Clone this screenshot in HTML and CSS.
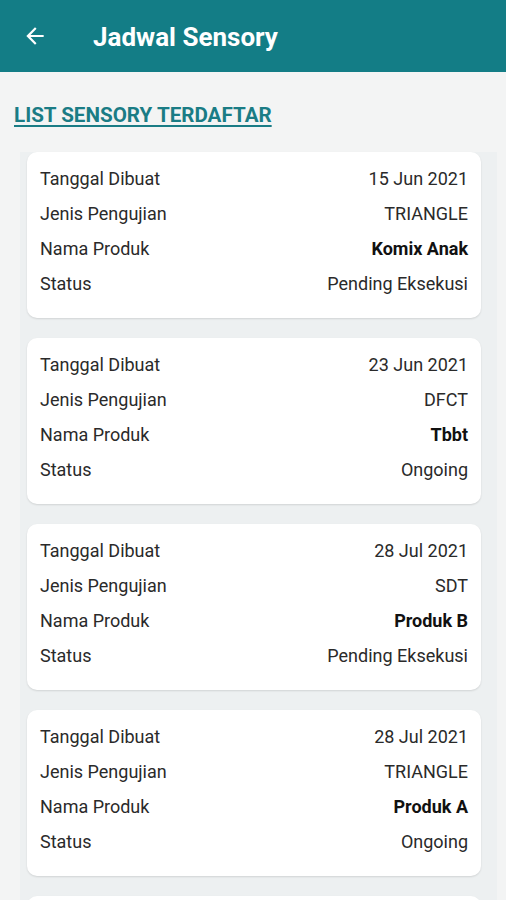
FILE: index.html
```html
<!DOCTYPE html>
<html lang="id">
<head>
    <meta charset="UTF-8">
    <meta name="viewport" content="width=device-width, initial-scale=1.0">
    <title>Jadwal Sensory</title>
    <link rel="stylesheet" href="styles.css">
</head>
<body>

    <!-- Toolbar -->
    <header class="toolbar">
        <svg class="back" viewBox="0 0 24 24" width="24" height="24">
            <path d="M20 11H7.83l5.59-5.59L12 4l-8 8 8 8 1.41-1.41L7.83 13H20v-2z" fill="#fff"/>
        </svg>
        <h1 class="toolbar-title">Jadwal Sensory</h1>
    </header>

    <h2 class="section-title">LIST SENSORY TERDAFTAR</h2>

    <!-- Daftar sensory -->
    <div class="list">
        <div class="card">
            <div class="row"><span>Tanggal Dibuat</span><span>15 Jun 2021</span></div>
            <div class="row"><span>Jenis Pengujian</span><span>TRIANGLE</span></div>
            <div class="row"><span>Nama Produk</span><span class="bold">Komix Anak</span></div>
            <div class="row"><span>Status</span><span>Pending Eksekusi</span></div>
        </div>
        <div class="card">
            <div class="row"><span>Tanggal Dibuat</span><span>23 Jun 2021</span></div>
            <div class="row"><span>Jenis Pengujian</span><span>DFCT</span></div>
            <div class="row"><span>Nama Produk</span><span class="bold">Tbbt</span></div>
            <div class="row"><span>Status</span><span>Ongoing</span></div>
        </div>
        <div class="card">
            <div class="row"><span>Tanggal Dibuat</span><span>28 Jul 2021</span></div>
            <div class="row"><span>Jenis Pengujian</span><span>SDT</span></div>
            <div class="row"><span>Nama Produk</span><span class="bold">Produk B</span></div>
            <div class="row"><span>Status</span><span>Pending Eksekusi</span></div>
        </div>
        <div class="card">
            <div class="row"><span>Tanggal Dibuat</span><span>28 Jul 2021</span></div>
            <div class="row"><span>Jenis Pengujian</span><span>TRIANGLE</span></div>
            <div class="row"><span>Nama Produk</span><span class="bold">Produk A</span></div>
            <div class="row"><span>Status</span><span>Ongoing</span></div>
        </div>
        <!-- Kartu berikutnya, hanya terlihat tepinya -->
        <div class="card card-peek"></div>
    </div>

</body>
</html>
```

FILE: styles.css
```css
body {
    margin: 0;
    font-family: Roboto, "Liberation Sans", sans-serif;
    background-color: #f3f4f4;
    color: #222;
    height: 900px;
    overflow: hidden;
}
.toolbar {
    height: 72px;
    background-color: #137d86;
    display: flex;
    align-items: center;
    padding-left: 22px;
}
.back {
    width: 26px;
    height: 26px;
}
.toolbar-title {
    margin: 2px 0 0 45px;
    color: white;
    font-size: 26px;
    font-weight: 700;
}
.section-title {
    margin: 29px 0 0 14px;
    font-size: 20.6px;
    font-weight: 700;
    color: #1a7c85;
    text-decoration: underline;
    text-underline-offset: 3px;
    line-height: 28px;
}
.list {
    margin: 23px 9px 0 20px;
    padding: 0 16px 0 7px;
    background-color: #edf0f1;
    display: flex;
    flex-direction: column;
    gap: 20px;
}
.card {
    background-color: white;
    border-radius: 10px;
    padding: 9px 13px 17px 13px;
    box-shadow: 0 1px 2px rgba(0, 0, 0, 0.12);
}
.card-peek {
    height: 140px;
}
.row {
    display: flex;
    justify-content: space-between;
    height: 35px;
    line-height: 35px;
    font-size: 18px;
    color: #2a2a2a;
}
.bold {
    font-weight: 700;
    color: #111;
}
```
